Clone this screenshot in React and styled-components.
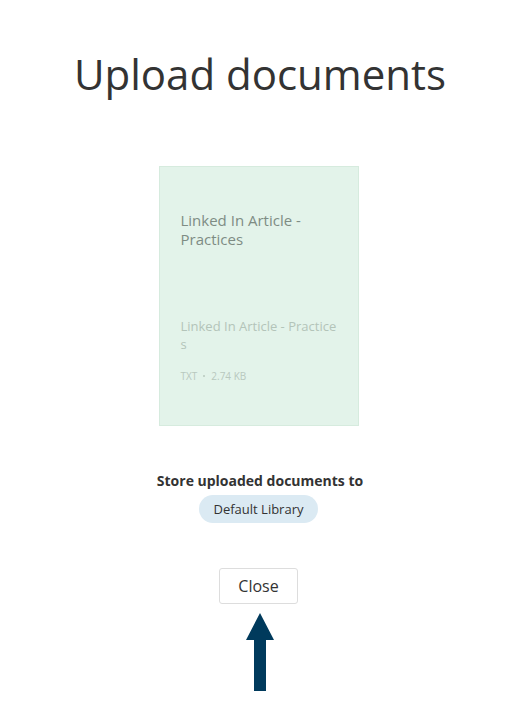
import React from 'react';
import styled, { createGlobalStyle } from 'styled-components';

const GlobalStyle = createGlobalStyle`
  body {
    margin: 0;
    background: #ffffff;
    font-family: "Open Sans", "Liberation Sans", sans-serif;
    color: #333333;
  }
`;

const Page = styled.div`
  width: 520px;
  display: flex;
  flex-direction: column;
  align-items: center;
`;

const Title = styled.h1`
  margin: 45px 0 0;
  font-size: 42px;
  font-weight: 400;
  line-height: 58px;
  color: #333333;
`;

const Card = styled.div`
  box-sizing: border-box;
  width: 200px;
  height: 260px;
  margin-top: 63px;
  margin-left: -3px;
  padding: 44px 17px 0 21px;
  background: #e3f3ea;
  border: 1px solid #d6ebde;
  display: flex;
  flex-direction: column;
`;

const CardTitle = styled.div`
  font-size: 15px;
  line-height: 19px;
  color: #7e8c84;
`;

const FileName = styled.div`
  margin-top: 68px;
  font-size: 13px;
  line-height: 18px;
  color: #b3c4b9;
  word-break: break-all;
`;

const Meta = styled.div`
  margin-top: 16px;
  font-size: 10px;
  line-height: 14px;
  color: #b8c8be;
  display: flex;
  align-items: center;
  gap: 6px;
`;

const Dot = styled.span`
  width: 2px;
  height: 2px;
  border-radius: 50%;
  background: #b8c8be;
`;

const StoreLabel = styled.div`
  margin-top: 44px;
  font-size: 14px;
  font-weight: 700;
  line-height: 22px;
  color: #333333;
`;

const Pill = styled.div`
  margin-top: 3px;
  margin-left: -3px;
  height: 28px;
  padding: 0 15px;
  border-radius: 14px;
  background: #dbeaf3;
  font-size: 13px;
  line-height: 28px;
  color: #333333;
`;

const CloseButton = styled.button`
  margin-top: 45px;
  margin-left: -3px;
  width: 79px;
  height: 36px;
  background: #ffffff;
  border: 1px solid #dddddd;
  border-radius: 3px;
  font-family: inherit;
  font-size: 16px;
  color: #333333;
  cursor: pointer;
`;

const Arrow = styled.svg`
  display: block;
  margin-top: 9px;
`;

function App() {
  return (
    <>
      <GlobalStyle />
      <Page>
        <Title>Upload documents</Title>
        <Card>
          <CardTitle>Linked In Article - Practices</CardTitle>
          <FileName>Linked In Article - Practices</FileName>
          <Meta>
            TXT <Dot /> 2.74 KB
          </Meta>
        </Card>
        <StoreLabel>Store uploaded documents to</StoreLabel>
        <Pill>Default Library</Pill>
        <CloseButton>Close</CloseButton>
        <Arrow width="28" height="78" viewBox="0 0 28 78">
          <path d="M14 0 L28 27 L20 27 L20 78 L8 78 L8 27 L0 27 Z" fill="#003a5c" />
        </Arrow>
      </Page>
    </>
  );
}

export default App;
